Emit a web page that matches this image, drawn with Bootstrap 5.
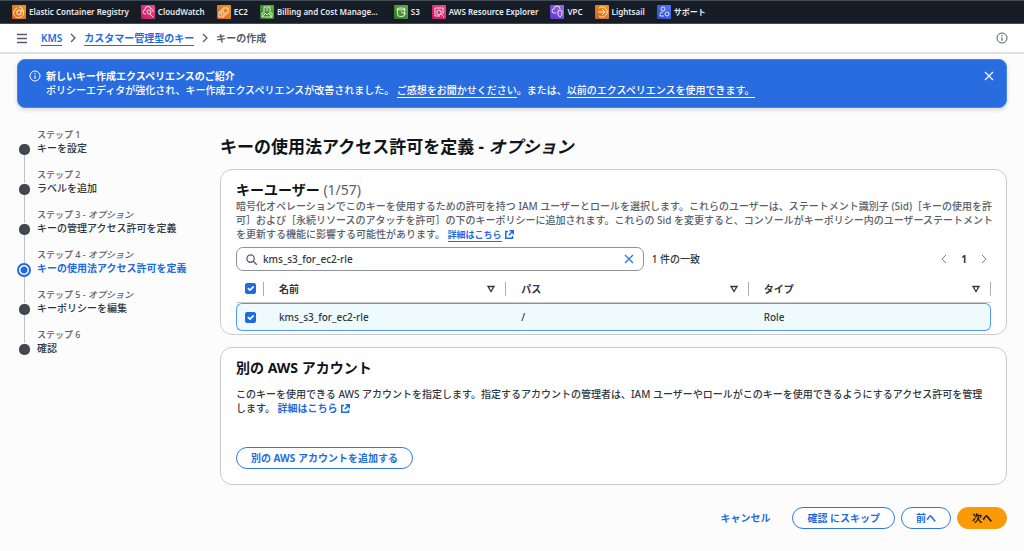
<!DOCTYPE html>
<html lang="ja">
<head>
<meta charset="utf-8">
<meta name="viewport" content="width=device-width, initial-scale=1">
<title>キーの作成 | KMS</title>
<link href="https://cdn.jsdelivr.net/npm/bootstrap@5.3.0/dist/css/bootstrap.min.css" rel="stylesheet">
<style>
:root { --ink:#0f141a; --body:#30363e; --soft:#5a606b; --blue:#1f6be0; --line:#c9cbd1; }
body { font-family:"Noto Sans","Noto Sans CJK JP",sans-serif; font-size:10px; line-height:14px; color:var(--body); background:#fcfcfd; }
a { color:var(--blue); }
svg { display:block; flex:none; fill:none; stroke:currentColor; }
.favbar { background:#161d27; border-top:1px solid #424a55; border-bottom:1px solid #424a55; height:24px; padding:0 12px; gap:12px; font-size:8px; font-weight:600; }
.favbar a { color:#e9ebef; gap:3px; white-space:nowrap; }
.favbar svg { width:14px; height:14px; stroke:#ffffffd0; stroke-width:1; border-radius:1px; }
.s-orange { background:linear-gradient(45deg,#d4621a,#f7981d); }
.s-pink { background:linear-gradient(45deg,#c2185f,#f04a8c); }
.s-green { background:linear-gradient(45deg,#2a7a22,#5fae3c); }
.s-violet { background:linear-gradient(45deg,#5a34c4,#a06bf5); }
.s-blue { background:linear-gradient(45deg,#2f48c8,#5478f5); }
.crumbbar { background:#fff; border-bottom:2px solid #dee0e5; height:30px; padding:0 16px; font-weight:600; color:#565c67; }
.crumbbar nav { margin-left:13px; }
.crumbbar ol { gap:8px; }
.ulink { text-decoration:none; border-bottom:1px solid currentColor; }
.more { display:inline-block; line-height:13px; font-weight:600; }
.more.ulink { font-size:9px; font-weight:700; }
.plain-btn { border:0; background:none; padding:0; color:inherit; }
.flash { background:#286ce0; border:1px solid #4585ee; border-radius:8px; margin:5px 17px 0; padding:9px 11px; gap:5px; color:#fff; box-shadow:0 2px 5px #0002; min-height:49px; font-weight:500; }
.flash a { color:#fff; }
.shell { padding:20px 17px 21px; }
.steps { width:203px; flex:none; }
.steps li { position:relative; padding:0 0 13px 20px; color:var(--body); font-weight:500; }
.steps li::before { content:""; position:absolute; left:7px; top:27px; bottom:-15px; width:1px; background:#c0c2c9; }
.steps li:last-child::before { display:none; }
.steps li::after { content:""; position:absolute; left:2px; top:16px; width:11px; height:11px; border-radius:5px; background:#424751; }
.steps small { display:block; font-size:9px; line-height:13px; color:var(--soft); }
.steps li.now { color:var(--blue); font-weight:700; }
.steps li.now small { font-weight:500; }
.steps li.now::after { left:0; top:15px; width:14px; height:14px; border-radius:50%; border:2px solid var(--blue); background:radial-gradient(circle,var(--blue) 3px,#fff 4px); }
h1 { font-size:17px; line-height:22px; font-weight:700; color:var(--ink); margin:8px 0 11px; }
h2 { font-size:14px; line-height:18px; font-weight:700; color:var(--ink); margin:0; }
h2 span { font-weight:400; color:var(--soft); }
.panel { background:#fff; border:1px solid var(--line); border-radius:12px; padding:11px 15px 3px; margin-bottom:12px; font-weight:500; }
.panel p { margin:0; }
.panel .intro { color:var(--soft); margin-right:-6px; }
.toolbar { margin-top:5px; }
.account p { margin-top:10px; }
.account .pill { margin:32px 0 12px; display:block; }
.ext { display:inline-block; width:9px; height:9px; vertical-align:-1px; margin-left:3px; stroke-width:2; color:var(--blue); }
.find { flex:0 0 54%; border:1px solid #8e929b; border-radius:7px; height:24px; padding:0 9px; gap:6px; color:#565c67; }
.find input { border:0; outline:0; padding:0; flex:1; min-width:0; font-weight:500; color:var(--body); line-height:16px; background:none; }
.find .clear { color:#2f78ea; }
.pager { gap:14px; }
.grid { width:100%; table-layout:fixed; border-collapse:separate; border-spacing:0; }
.grid th, .grid td { padding:0 0 0 15px; font-weight:500; }
.grid th { height:32px; font-weight:600; padding-top:4px; border-bottom:1px solid var(--line); }
.grid th > div { border-right:1px solid #a9acb4; height:14px; padding-right:10px; }
.grid td { height:28px; background:#effaff; border:solid #539af4; border-width:1px 0; }
.grid td:first-child { border-left-width:1px; border-radius:6px 0 0 6px; padding-left:8px; }
.grid td:last-child { border-right-width:1px; border-radius:0 6px 6px 0; }
.grid th:first-child { padding-left:9px; }
.grid th:first-child > div { padding-right:0; }
.grid .form-check-input { width:11px; height:11px; margin:0; border-radius:2px; display:block; background-size:11px; }
.form-check-input:checked { background-color:var(--blue); border-color:var(--blue); }
.pill { border:1px solid #2f78ea; border-radius:12px; background:#fff; color:var(--blue); font-size:10px; line-height:14px; font-weight:700; padding:3px 14px; height:22px; }
.pill.go { background:#f99b07; border-color:#f99b07; color:var(--ink); }
.pill.bare { border-color:transparent; background:none; padding:3px 6px; margin-right:9px; }
.actions { gap:6px; margin-top:22px; }
</style>
</head>
<body>
<nav class="favbar d-flex align-items-center overflow-hidden" aria-label="お気に入り">
  <a href="#" class="d-flex align-items-center text-decoration-none"><svg class="s-orange" viewBox="0 0 14 14"><path d="M5 3a5 5 0 1 0 5 1M5 6l2-1 2 1v3l-2 1-2-1zM7 2l3 1v4"/></svg>Elastic Container Registry</a>
  <a href="#" class="d-flex align-items-center text-decoration-none"><svg class="s-pink" viewBox="0 0 14 14"><path d="M5 9H4a2 2 0 0 1 0-4 3 3 0 0 1 6-1 2 2 0 0 1 2 3M9 9l3 3"/><circle cx="8" cy="7" r="2"/></svg>CloudWatch</a>
  <a href="#" class="d-flex align-items-center text-decoration-none"><svg class="s-orange" viewBox="0 0 14 14"><path d="M6 3h5v5H6zM5 5H4v5h5V9M4 7H2v5h5v-1"/></svg>EC2</a>
  <a href="#" class="d-flex align-items-center text-decoration-none"><svg class="s-green" viewBox="0 0 14 14"><path d="M4 7V2h6v5M7 3v3M2 8h3l2 2 2-2h3v4H2zM2 12l3-3M12 12 9 9"/></svg>Billing and Cost Manage...</a>
  <a href="#" class="d-flex align-items-center text-decoration-none ms-1"><svg class="s-green" viewBox="0 0 14 14"><path d="M3 4l1 7q3 1 6 0l1-7M7 7l5 2"/><ellipse cx="7" cy="4" rx="4" ry="1"/></svg>S3</a>
  <a href="#" class="d-flex align-items-center text-decoration-none"><svg class="s-pink" viewBox="0 0 14 14"><path d="M3 3h8v6M3 3v8h5M5 6l2-1 2 1v3l-2 1-2-1zM9 9l3 3"/></svg>AWS Resource Explorer</a>
  <a href="#" class="d-flex align-items-center text-decoration-none"><svg class="s-violet" viewBox="0 0 14 14"><path d="M6 8H4a2 2 0 0 1 0-4 3 3 0 0 1 6 0M8 6l2-1 2 1v4l-2 2-2-2z"/></svg>VPC</a>
  <a href="#" class="d-flex align-items-center text-decoration-none"><svg class="s-orange" viewBox="0 0 14 14"><path d="M4 3a5 5 0 1 1 0 8M3 7h7M7 4l3 3-3 3"/></svg>Lightsail</a>
  <a href="#" class="d-flex align-items-center text-decoration-none"><svg class="s-blue" viewBox="0 0 14 14"><circle cx="6" cy="4" r="2"/><path d="M7 11H3V9q0-2 3-2"/><circle cx="10" cy="9" r="2"/></svg>サポート</a>
</nav>
<header class="crumbbar d-flex align-items-center">
  <button class="plain-btn" aria-label="メニュー"><svg width="12" height="12" viewBox="0 0 12 12"><path d="M1 2.5h10M1 6.5h10M1 10.5h10" stroke-width="1.3"/></svg></button>
  <nav class="flex-grow-1" aria-label="パンくず">
    <ol class="list-unstyled d-flex align-items-center m-0 ps-0">
      <li><a class="ulink" href="#">KMS</a></li>
      <li><svg width="6" height="10" viewBox="0 0 6 10" stroke-width="1.3"><path d="M1 1l4 4-4 4"/></svg></li>
      <li><a class="ulink" href="#">カスタマー管理型のキー</a></li>
      <li><svg width="6" height="10" viewBox="0 0 6 10" stroke-width="1.3"><path d="M1 1l4 4-4 4"/></svg></li>
      <li aria-current="page">キーの作成</li>
    </ol>
  </nav>
  <button class="plain-btn" aria-label="情報"><svg width="12" height="12" viewBox="0 0 12 12"><circle cx="6" cy="6" r="5"/><path d="M6 5.4v3.4M6 3v1.3" stroke-width="1.2"/></svg></button>
</header>
<div class="flash d-flex align-items-start" role="status">
  <svg width="12" height="14" viewBox="0 -1 12 14"><circle cx="6" cy="6" r="5"/><path d="M6 5.4v3.4M6 3v1.3" stroke-width="1.2"/></svg>
  <div class="flex-grow-1"><strong>新しいキー作成エクスペリエンスのご紹介</strong><br>ポリシーエディタが強化され、キー作成エクスペリエンスが改善されました。 <a class="ulink" href="#">ご感想をお聞かせください</a>。または、<a class="ulink" href="#">以前のエクスペリエンスを使用できます。</a></div>
  <button class="plain-btn" aria-label="閉じる"><svg width="12" height="14" viewBox="0 -1 12 14"><path d="M2 2l8 8M10 2l-8 8" stroke-width="1.2"/></svg></button>
</div>
<div class="shell d-flex">
  <ol class="steps list-unstyled m-0">
    <li><small>ステップ 1</small>キーを設定</li>
    <li><small>ステップ 2</small>ラベルを追加</li>
    <li><small>ステップ 3 - <i>オプション</i></small>キーの管理アクセス許可を定義</li>
    <li class="now" aria-current="step"><small>ステップ 4 - <i>オプション</i></small>キーの使用法アクセス許可を定義</li>
    <li><small>ステップ 5 - <i>オプション</i></small>キーポリシーを編集</li>
    <li><small>ステップ 6</small>確認</li>
  </ol>
  <main class="flex-grow-1">
    <h1>キーの使用法アクセス許可を定義 - <i>オプション</i></h1>
    <section class="panel">
      <h2>キーユーザー <span>(1/57)</span></h2>
      <p class="intro">暗号化オペレーションでこのキーを使用するための許可を持つ IAM ユーザーとロールを選択します。これらのユーザーは、ステートメント識別子 (Sid)［キーの使用を許可］および［永続リソースのアタッチを許可］の下のキーポリシーに追加されます。これらの Sid を変更すると、コンソールがキーポリシー内のユーザーステートメントを更新する機能に影響する可能性があります。 <a class="ulink more" href="#">詳細はこちら</a><svg class="ext" viewBox="0 0 12 12"><path d="M4 2H1v9h9V8M6 1h5v5M11 1 5 7"/></svg></p>
      <div class="toolbar d-flex align-items-center">
        <div class="find d-flex align-items-center">
          <svg width="11" height="11" viewBox="0 0 12 12" stroke-width="1.4"><circle cx="5" cy="5" r="4"/><path d="M8 8l4 4"/></svg>
          <input type="text" value="kms_s3_for_ec2-rle" aria-label="キーユーザーを検索">
          <button class="plain-btn clear" aria-label="クリア"><svg width="10" height="10" viewBox="0 0 10 10" stroke-width="1.4"><path d="M1 1l8 8M9 1 1 9"/></svg></button>
        </div>
        <span class="ms-2 flex-grow-1">1 件の一致</span>
        <div class="pager d-flex align-items-center me-1">
          <button class="plain-btn text-black-50" aria-label="前のページ"><svg width="6" height="10" viewBox="0 0 6 10"><path d="M5 1 1 5l4 4"/></svg></button>
          <b>1</b>
          <button class="plain-btn text-black-50" aria-label="次のページ"><svg width="6" height="10" viewBox="0 0 6 10"><path d="M1 1l4 4-4 4"/></svg></button>
        </div>
      </div>
      <table class="grid">
        <colgroup><col width="28"><col><col><col></colgroup>
        <thead><tr>
          <th scope="col"><div class="d-flex align-items-center"><input class="form-check-input" type="checkbox" checked aria-label="すべて選択"></div></th>
          <th scope="col"><div class="d-flex align-items-center justify-content-between">名前<svg width="8" height="8" viewBox="0 0 8 8" stroke-width="1.3"><path d="M1 1.5h6L4 6.5z"/></svg></div></th>
          <th scope="col"><div class="d-flex align-items-center justify-content-between">パス<svg width="8" height="8" viewBox="0 0 8 8" stroke-width="1.3"><path d="M1 1.5h6L4 6.5z"/></svg></div></th>
          <th scope="col"><div class="d-flex align-items-center justify-content-between">タイプ<svg width="8" height="8" viewBox="0 0 8 8" stroke-width="1.3"><path d="M1 1.5h6L4 6.5z"/></svg></div></th>
        </tr></thead>
        <tbody><tr>
          <td><input class="form-check-input" type="checkbox" checked aria-label="kms_s3_for_ec2-rle を選択"></td>
          <td>kms_s3_for_ec2-rle</td><td>/</td><td>Role</td>
        </tr></tbody>
      </table>
    </section>
    <section class="panel account">
      <h2>別の AWS アカウント</h2>
      <p>このキーを使用できる AWS アカウントを指定します。指定するアカウントの管理者は、IAM ユーザーやロールがこのキーを使用できるようにするアクセス許可を管理します。 <a class="more text-decoration-none" href="#">詳細はこちら</a><svg class="ext" viewBox="0 0 12 12"><path d="M4 2H1v9h9V8M6 1h5v5M11 1 5 7"/></svg></p>
      <button class="pill">別の AWS アカウントを追加する</button>
    </section>
    <div class="actions d-flex justify-content-end">
      <button class="pill bare">キャンセル</button>
      <button class="pill">確認 にスキップ</button>
      <button class="pill">前へ</button>
      <button class="pill go">次へ</button>
    </div>
  </main>
</div>
<script src="https://cdn.jsdelivr.net/npm/bootstrap@5.3.0/dist/js/bootstrap.bundle.min.js"></script>
</body>
</html>
